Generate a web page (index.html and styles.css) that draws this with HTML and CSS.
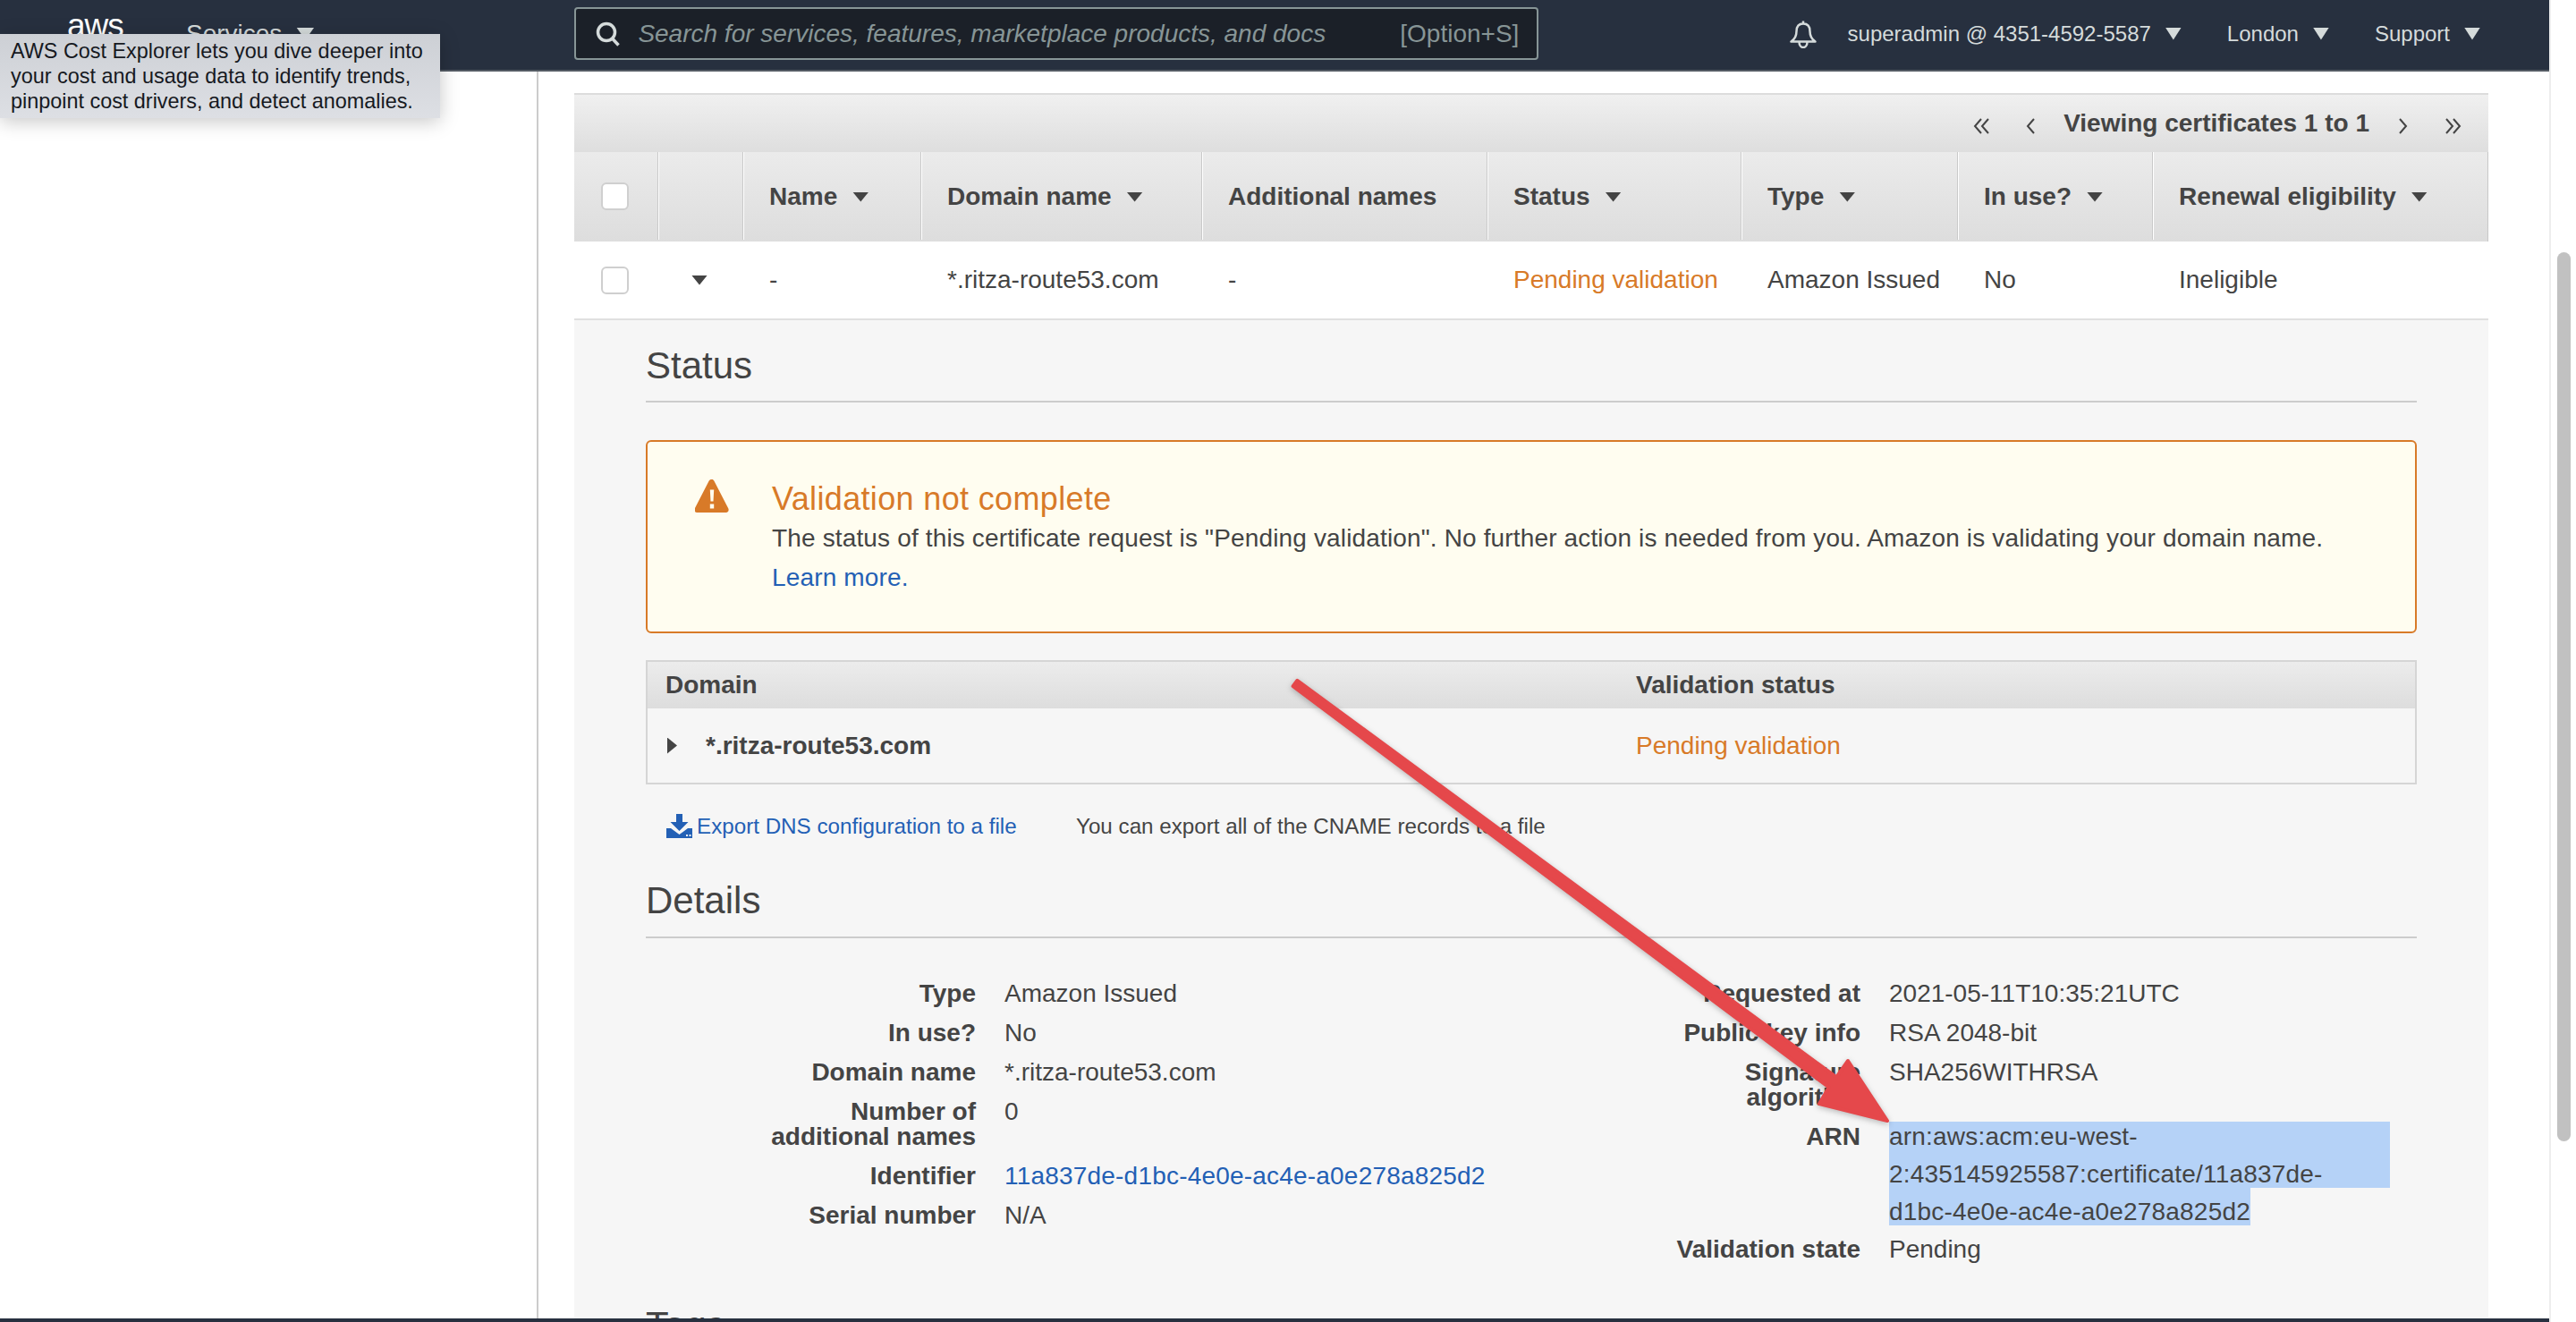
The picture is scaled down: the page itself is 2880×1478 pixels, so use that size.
FILE: index.html
```html
<!DOCTYPE html>
<html lang="en">
<head>
<meta charset="utf-8">
<title>Certificate Manager</title>
<link rel="stylesheet" href="styles.css">
</head>
<body>
<div class="viewport">
  <header class="topbar">
    <span class="logo">aws</span>
    <span class="services">Services</span><i class="caret services-caret"></i>
    <div class="search">
      <svg class="search-icon" viewBox="0 0 28 28" aria-hidden="true"><circle cx="12" cy="12" r="9.5"/><path d="M18.5 19l7 7.5"/></svg>
      <span class="placeholder">Search for services, features, marketplace products, and docs</span>
      <span class="shortcut">[Option+S]</span>
    </div>
    <nav class="topnav">
      <svg class="bell" viewBox="0 0 32 32" aria-hidden="true"><path d="M16 1.5v3M16 4.500c-5 0-7.500 3.500-7.500 8.500 0 5-1.500 8.500-6 11.500h27c-4.500-3-6-6.500-6-11.500 0-5-2.500-8.500-7.500-8.500zM11.500 25c0 3.500 2 6 4.500 6s4.500-2.500 4.500-6"/></svg>
      <span class="navitem">superadmin @ 4351-4592-5587<i class="caret"></i></span>
      <span class="navitem">London<i class="caret"></i></span>
      <span class="navitem">Support<i class="caret"></i></span>
    </nav>
  </header>

  <div class="main">
    <aside class="sidebar"></aside>
    <section class="content">
      <div class="pager">
        <svg class="chev" viewBox="0 0 18 18" aria-hidden="true"><path d="M9 1L2 9l7 8M17 1l-7 8 7 8"/></svg>
        <svg class="chev single chev-prev" viewBox="0 0 10 18" aria-hidden="true"><path d="M9 1L2 9l7 8"/></svg>
        <strong class="pager-text">Viewing certificates 1 to 1</strong>
        <svg class="chev single chev-next" viewBox="0 0 10 18" aria-hidden="true"><path d="M1 1l7 8-7 8"/></svg>
        <svg class="chev chev-last" viewBox="0 0 18 18" aria-hidden="true"><path d="M1 1l7 8-7 8M9 1l7 8-7 8"/></svg>
      </div>
      <div class="cert-grid thead">
        <div class="th"><span class="checkbox"></span></div>
        <div class="th"></div>
        <div class="th">Name<i class="sort"></i></div>
        <div class="th">Domain name<i class="sort"></i></div>
        <div class="th">Additional names</div>
        <div class="th">Status<i class="sort"></i></div>
        <div class="th">Type<i class="sort"></i></div>
        <div class="th">In use?<i class="sort"></i></div>
        <div class="th">Renewal eligibility<i class="sort"></i></div>
      </div>
      <div class="cert-grid tbody">
        <div class="td"><span class="checkbox"></span></div>
        <div class="td expander"><i class="sort open"></i></div>
        <div class="td">-</div>
        <div class="td">*.ritza-route53.com</div>
        <div class="td">-</div>
        <div class="td pending">Pending validation</div>
        <div class="td">Amazon Issued</div>
        <div class="td">No</div>
        <div class="td">Ineligible</div>
      </div>

      <div class="panel">
        <h2 class="section-title">Status</h2>
        <div class="alert">
          <svg class="warn" viewBox="0 0 38 37" aria-hidden="true"><path fill-rule="evenodd" d="M19 0c1 0 1.800.6 2.300 1.500l16 31c.9 2-.2 4.500-2.500 4.500H2.200c-2.300 0-3.400-2.500-2.500-4.500l16-31C16.200.6 17 0 19 0zM16.800 11.500l.7 13h3l.7-13zM16.800 27.500v5h4.400v-5z"/></svg>
          <div class="alert-body">
            <div class="alert-title">Validation not complete</div>
            <div class="alert-text">The status of this certificate request is "Pending validation". No further action is needed from you. Amazon is validating your domain name.</div>
            <a class="link alert-text">Learn more.</a>
          </div>
        </div>

        <div class="domains">
          <div class="domains-row domains-head"><div class="domain-cell">Domain</div><div>Validation status</div></div>
          <div class="domains-row domains-item">
            <div class="domain-cell domain-name"><i class="tri-right"></i>*.ritza-route53.com</div>
            <div class="pending">Pending validation</div>
          </div>
        </div>

        <div class="export">
          <a class="link export-link">
            <svg class="dl" viewBox="0 0 29 27" aria-hidden="true"><path d="M11 0h7v9h6.500L14.500 19 4.500 9H11z"/><path fill-rule="evenodd" d="M0 16h5l9.500 7L24 16h5v11H0zM22 23v2h2v-2zM25.500 23v2h2v-2z"/></svg>
            Export DNS configuration to a file
          </a>
          <span class="export-note">You can export all of the CNAME records to a file</span>
        </div>

        <h2 class="section-title details-title">Details</h2>
        <div class="details">
          <dl class="facts">
            <dt>Type</dt><dd>Amazon Issued</dd>
            <dt>In use?</dt><dd>No</dd>
            <dt>Domain name</dt><dd>*.ritza-route53.com</dd>
            <dt>Number of<br>additional names</dt><dd>0</dd>
            <dt>Identifier</dt><dd><a class="link spaced">11a837de-d1bc-4e0e-ac4e-a0e278a825d2</a></dd>
            <dt>Serial number</dt><dd>N/A</dd>
          </dl>
          <dl class="facts">
            <dt>Requested at</dt><dd>2021-05-11T10:35:21UTC</dd>
            <dt>Public key info</dt><dd>RSA 2048-bit</dd>
            <dt>Signature<br>algorithm</dt><dd>SHA256WITHRSA</dd>
            <dt>ARN</dt><dd class="arn spaced">arn:aws:acm:eu-west-<br>2:435145925587:certificate/11a837de-<br>d1bc-4e0e-ac4e-a0e278a825d2</dd>
            <dt>Validation state</dt><dd>Pending</dd>
          </dl>
        </div>
        <h2 class="section-title tags-title">Tags</h2>
      </div>
    </section>
  </div>
  <div class="footer-bar"></div>

  <div class="tooltip">AWS Cost Explorer lets you dive deeper into<br>your cost and usage data to identify trends,<br>pinpoint cost drivers, and detect anomalies.</div>

  <svg class="arrow" viewBox="0 0 2850 1478" aria-hidden="true"><path d="M1450.400 760.800L2053.200 1204.400 2066 1186 2110 1253 2034 1234 2044.800 1215.600 1445.600 767.200z"/></svg>
</div>
<div class="scrollbar"><div class="thumb"></div></div>
</body>
</html>
```

FILE: styles.css
```css
* { box-sizing: border-box; }
html, body { margin: 0; padding: 0; }
body {
  display: flex;
  height: 1478px;
  overflow: hidden;
  background: #fff;
  color: #444;
  font-family: "Liberation Sans", Arial, sans-serif;
  font-size: 28px;
}
i { display: block; font-style: normal; }

.viewport {
  position: relative;
  display: flex;
  flex-direction: column;
  width: 2850px;
  height: 1478px;
}

/* top bar */
.topbar {
  flex: none;
  display: flex;
  align-items: center;
  height: 80px;
  padding: 0 77px 3px 75px;
  background: #27303f;
  border-bottom: 2px solid #545b64;
  color: #d5dbdb;
}
.logo {
  width: 133px;
  font-size: 37px;
  letter-spacing: -1px;
  color: #fff;
  line-height: 40px;
  transform: translateY(-9px);
}
.services { font-size: 28px; }
.caret {
  display: inline-block;
  width: 18px;
  height: 14px;
  margin-left: 16px;
  background: #d5dbdb;
  clip-path: polygon(0 0, 100% 0, 50% 100%);
}
.services-caret { width: 20px; }
.search {
  display: flex;
  align-items: center;
  width: 1078px;
  height: 59px;
  margin-left: 291px;
  padding: 0 20px 0 22px;
  background: #1b2028;
  border: 2px solid #879596;
  border-radius: 4px;
  color: #879596;
}
.search-icon {
  width: 28px;
  height: 28px;
  fill: none;
  stroke: #d5dbdb;
  stroke-width: 3.500;
}
.placeholder { margin-left: 19px; font-style: italic; white-space: nowrap; }
.shortcut { margin-left: auto; white-space: nowrap; }
.topnav {
  margin-left: auto;
  display: flex;
  align-items: center;
  font-size: 24px;
  white-space: nowrap;
}
.bell {
  width: 32px;
  height: 32px;
  margin-right: 34px;
  fill: none;
  stroke: #d5dbdb;
  stroke-width: 2.500;
  stroke-linejoin: round;
}
.navitem { display: flex; align-items: center; margin-right: 51px; }
.navitem:last-child { margin-right: 0; }

/* main area */
.main {
  flex: 1;
  min-height: 0;
  display: flex;
  overflow: hidden;
}
.sidebar {
  flex: none;
  width: 602px;
  border-right: 2px solid #ccc;
}
.content {
  flex: none;
  width: 2140px;
  margin-left: 40px;
  padding-top: 24px;
}

.pager {
  display: flex;
  align-items: center;
  height: 66px;
  padding-right: 30px;
  justify-content: flex-end;
  border-top: 2px solid #dcdcdc;
  background: linear-gradient(#f0f0f0, #dedede);
}
.pager-text { margin: 0 33px 0 32px; line-height: 66px; }
.chev {
  width: 18px;
  height: 18px;
  fill: none;
  stroke: #444;
  stroke-width: 2;
  margin-top: 5px;
}
.chev.single { width: 10px; }
.chev-prev { margin-left: 41px; }
.chev-next { margin-right: 42px; }

.cert-grid {
  display: grid;
  grid-template-columns: 93px 95px 199px 314px 319px 284px 242px 218px 376px;
}
.thead {
  height: 100px;
  background: linear-gradient(#ebebeb, #dddddd);
  font-weight: bold;
  border-right: 1px solid #c8c8c8;
}
.th {
  display: flex;
  align-items: center;
  height: 98px;
  padding: 2px 0 0 29px;
  border-left: 1px solid #c9c9c9;
  box-shadow: inset 1px 0 #fff;
  white-space: nowrap;
}
.th:first-child { border-left: 0; box-shadow: none; padding: 0 0 0 30px; }
.sort {
  width: 18px;
  height: 11px;
  margin-left: 17px;
  background: #444;
  clip-path: polygon(0 0, 100% 0, 50% 100%);
}
.sort.open { margin-left: 0; }
.tbody {
  height: 88px;
  background: #fff;
  border-bottom: 2px solid #e0e0e0;
}
.td {
  display: flex;
  align-items: center;
  padding-left: 30px;
  white-space: nowrap;
}
.expander { padding-left: 38px; }
.checkbox {
  display: block;
  width: 31px;
  height: 31px;
  background: #fff;
  border: 2px solid #cfcfcf;
  border-radius: 6px;
}
.pending { color: #d87a28; }
.link { color: #2360b5; }
.spaced { letter-spacing: .2px; }

/* detail panel */
.panel {
  padding: 0 80px;
  background: #f6f6f6;
}
.section-title {
  margin: 0;
  padding: 31px 0 19px;
  font-size: 42px;
  font-weight: normal;
  line-height: 40px;
  border-bottom: 2px solid #ccc;
}
.alert {
  display: flex;
  height: 216px;
  margin-top: 42px;
  padding: 42px 0 0 53px;
  background: #fffdf0;
  border: 2px solid #d87a28;
  border-radius: 6px;
}
.warn { flex: none; width: 38px; height: 37px; fill: #d87a28; }
.alert-body { margin-left: 48px; }
.alert-title { font-size: 36px; line-height: 44px; color: #d87a28; letter-spacing: .35px; }
.alert-text { display: block; line-height: 44px; white-space: nowrap; letter-spacing: .15px; }

.domains {
  margin-top: 30px;
  border: 2px solid #d5d5d5;
}
.domains-row {
  display: grid;
  grid-template-columns: 1105px 1fr;
  align-items: center;
}
.domains-head {
  height: 52px;
  font-weight: bold;
  background: linear-gradient(#ececec, #dddddd);
}
.domains-item { height: 83px; }
.domain-cell { padding-left: 20px; }
.domain-name { display: flex; align-items: center; font-weight: bold; }
.tri-right {
  width: 11px;
  height: 18px;
  margin: 0 32px 0 2px;
  background: #444;
  clip-path: polygon(0 0, 100% 50%, 0 100%);
}

.export {
  display: flex;
  align-items: center;
  height: 44px;
  margin-top: 25px;
  padding-left: 23px;
  font-size: 24.2px;
  white-space: nowrap;
}
.export-link { display: flex; align-items: center; width: 458px; }
.dl { flex: none; width: 29px; height: 27px; margin-right: 5px; fill: #2360b5; transform: translateY(-1px); }

.details-title { padding-top: 41px; padding-bottom: 20px; }
.details {
  display: grid;
  grid-template-columns: 990px 990px;
  margin-top: 40px;
}
.facts {
  display: grid;
  grid-template-columns: 369px 1fr;
  column-gap: 32px;
  align-content: start;
  margin: 0;
  line-height: 28px;
}
.facts + .facts { grid-template-columns: 368px 1fr; }
.facts dt { padding: 8px 0; text-align: right; font-weight: bold; }
.facts dd { margin: 0; padding: 8px 0; white-space: nowrap; }
.facts dd.arn {
  width: 560px;
  height: 125px;
  margin-top: 1px;
  padding: 0;
  line-height: 42px;
  background-image: linear-gradient(#b5d2f7, #b5d2f7), linear-gradient(#b5d2f7, #b5d2f7);
  background-repeat: no-repeat;
  background-size: 560px 74px, 404px 42px;
  background-position: 0 4px, 0 78px;
}
.tags-title { margin-top: 43px; padding-top: 0; border: 0; }

.footer-bar { flex: none; height: 4px; background: #27303f; }

/* overlays */
.tooltip {
  position: absolute;
  left: 0;
  top: 38px;
  width: 492px;
  height: 94px;
  padding: 5px 0 0 12px;
  font-size: 23.4px;
  line-height: 28px;
  color: #16191f;
  white-space: nowrap;
  background: linear-gradient(#cdd0d5, #dddfe4);
  box-shadow: 0 4px 20px rgba(0, 0, 0, .22);
}
.arrow {
  position: absolute;
  left: 0;
  top: 0;
  width: 2850px;
  height: 1478px;
  pointer-events: none;
  fill: #e5484b;
  stroke: #e5484b;
  stroke-width: 4;
  stroke-linejoin: round;
  filter: drop-shadow(0 2px 3px rgba(0, 0, 0, .25));
}

/* scrollbar */
.scrollbar {
  position: relative;
  flex: none;
  width: 30px;
  height: 1478px;
  background: #fff;
  border-left: 2px solid #eee;
}
.thumb {
  position: absolute;
  left: 7px;
  top: 282px;
  width: 15px;
  height: 994px;
  background: #c1c1c1;
  border-radius: 8px;
}
```
